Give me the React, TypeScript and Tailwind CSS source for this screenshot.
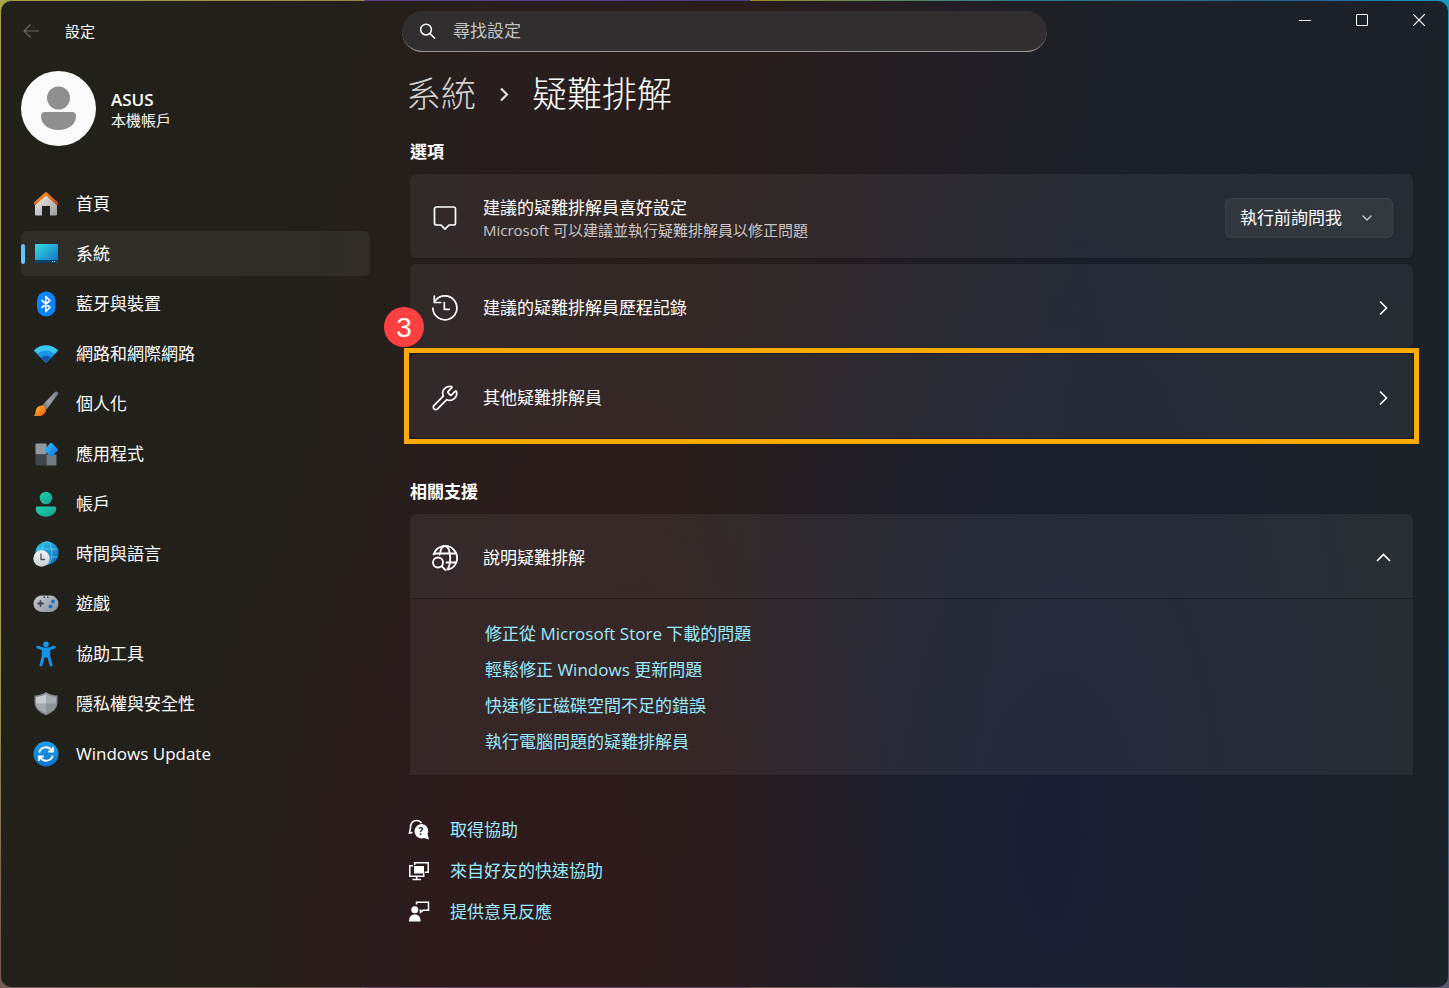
import type { ReactNode } from "react";
import { ChevronDown, Wrench } from "lucide-react";

const HomeIcon = () => (
  <svg width="26" height="26" viewBox="0 0 26 26" aria-hidden="true">
    <defs>
      <linearGradient id="home-wall" x1="0" y1="0" x2="1" y2="1">
        <stop offset="0" stopColor="#f0f0f0" />
        <stop offset="1" stopColor="#9b9b9b" />
      </linearGradient>
      <linearGradient id="home-roof" x1="0" y1="0" x2="1" y2="1">
        <stop offset="0" stopColor="#ff9a1f" />
        <stop offset="1" stopColor="#d14a0c" />
      </linearGradient>
    </defs>
    <path d="M13 4 24 14v9.500a1 1 0 0 1-1 1h-6V15H9v9.500H3a1 1 0 0 1-1-1V14Z" fill="url(#home-wall)" />
    <path d="M2.200 12.300 13 2.500l10.800 9.800" fill="none" stroke="url(#home-roof)" strokeWidth="2.800" strokeLinecap="round" strokeLinejoin="round" />
  </svg>
);

const SystemIcon = () => (
  <svg width="26" height="26" viewBox="0 0 26 26" aria-hidden="true">
    <defs>
      <linearGradient id="sys-screen" x1="0" y1="0" x2="1" y2="1">
        <stop offset="0" stopColor="#38dbe6" />
        <stop offset="1" stopColor="#0f6fc5" />
      </linearGradient>
    </defs>
    <rect x="2" y="3" width="23" height="19" rx="1" fill="url(#sys-screen)" />
    <path d="M2 19h23v2a1 1 0 0 1-1 1H3a1 1 0 0 1-1-1Z" fill="#0c4267" />
    <path d="M19 20h1v1h-1zM21 20h1v1h-1z" fill="#8fd6ee" />
  </svg>
);

const BluetoothIcon = () => (
  <svg width="26" height="26" viewBox="0 0 26 26" aria-hidden="true">
    <rect x="4" y="0.500" width="18.500" height="25" rx="9" fill="#0a84ff" />
    <path d="M8.500 9.200 17 16.500l-4.200 4V5.500l4.200 4-8.500 7.300" fill="none" stroke="#fff" strokeWidth="1.700" strokeLinejoin="round" />
  </svg>
);

const NetworkIcon = () => (
  <svg width="26" height="26" viewBox="0 0 26 26" aria-hidden="true">
    <path d="M.8 9.500C7.500 2.600 18.500 2.600 25.200 9.500L13 21.800Z" fill="#39c8f5" />
    <path d="M4.200 13c5-4.700 12.600-4.700 17.600 0L13 21.800Z" fill="#1f93e4" />
    <path d="M8 16.700c3-2.600 7-2.600 10 0l-5 5.100Z" fill="#0f58a8" />
  </svg>
);

const BrushIcon = () => (
  <svg width="26" height="26" viewBox="0 0 26 26" aria-hidden="true">
    <defs>
      <linearGradient id="brush-handle" x1="1" y1="0" x2="0" y2="1">
        <stop offset="0" stopColor="#747b82" />
        <stop offset="0.600" stopColor="#9ba2a9" />
        <stop offset="1" stopColor="#656c73" />
      </linearGradient>
      <linearGradient id="brush-tip" x1="0" y1="0" x2="1" y2="1">
        <stop offset="0" stopColor="#ffc02e" />
        <stop offset="1" stopColor="#ec5a12" />
      </linearGradient>
    </defs>
    <path d="M24.600 1c.8.700.6 2-.2 3L13.700 18.300l-4.300-4L21.200 1.600C22.300.4 23.700.2 24.600 1Z" fill="url(#brush-handle)" />
    <path d="M7.800 14.700c3.400-.6 6 2.300 4.900 5.700-1.300 4-6.300 5.600-12 4.200 2.200-1.300 1.600-3.300 2.300-5.800.6-2.200 2.400-3.700 4.800-4.100Z" fill="url(#brush-tip)" />
  </svg>
);

const AppsIcon = () => (
  <svg width="26" height="26" viewBox="0 0 26 26" aria-hidden="true">
    <defs>
      <linearGradient id="apps-diamond" x1="0" y1="0" x2="1" y2="1">
        <stop offset="0" stopColor="#3ac4fb" />
        <stop offset="1" stopColor="#0a6fd6" />
      </linearGradient>
    </defs>
    <path d="M3.500 2.500h10v11h-11v-10a1 1 0 0 1 1-1Z" fill="#9299a1" />
    <path d="M2.500 13.500h11v11h-10a1 1 0 0 1-1-1Z" fill="#41464c" />
    <path d="M13.500 13.500h10v10a1 1 0 0 1-1 1h-9Z" fill="#737a82" />
    <path d="M17.300 2.300a1.300 1.300 0 0 1 1.800 0l5.600 5.600a1.300 1.300 0 0 1 0 1.800l-5.600 5.600a1.300 1.300 0 0 1-1.800 0l-5.600-5.600a1.300 1.300 0 0 1 0-1.800Z" fill="url(#apps-diamond)" />
  </svg>
);

const AccountIcon = () => (
  <svg width="26" height="26" viewBox="0 0 26 26" aria-hidden="true">
    <defs>
      <linearGradient id="acct" x1="0" y1="0" x2="1" y2="1">
        <stop offset="0" stopColor="#23d3ae" />
        <stop offset="1" stopColor="#119c8b" />
      </linearGradient>
    </defs>
    <circle cx="13" cy="7" r="6.300" fill="url(#acct)" />
    <path d="M4.500 15.500h17a1.800 1.800 0 0 1 1.800 1.800c0 5-4.300 8.400-10.300 8.400S2.700 22.300 2.700 17.300a1.800 1.800 0 0 1 1.800-1.800Z" fill="url(#acct)" />
  </svg>
);

const TimeIcon = () => (
  <svg width="26" height="26" viewBox="0 0 26 26" aria-hidden="true">
    <defs>
      <linearGradient id="time-globe" x1="0" y1="0" x2="1" y2="1">
        <stop offset="0" stopColor="#35c9ea" />
        <stop offset="1" stopColor="#0c62bd" />
      </linearGradient>
      <linearGradient id="time-clock" x1="0" y1="0" x2="0" y2="1">
        <stop offset="0" stopColor="#f5f5f5" />
        <stop offset="1" stopColor="#c9ced2" />
      </linearGradient>
    </defs>
    <circle cx="14" cy="12" r="11.500" fill="url(#time-globe)" />
    <g fill="none" stroke="#5fe0f4" strokeOpacity="0.700" strokeWidth="1">
      <ellipse cx="14" cy="12" rx="5" ry="11.500" />
      <path d="M3.500 8h21M3.500 16h21" />
    </g>
    <circle cx="8.500" cy="17.500" r="8.200" fill="url(#time-clock)" />
    <path d="M8 12.500v6h4" fill="none" stroke="#50565c" strokeWidth="1.300" />
  </svg>
);

const GamingIcon = () => (
  <svg width="26" height="26" viewBox="0 0 26 26" aria-hidden="true">
    <defs>
      <linearGradient id="pad" x1="0" y1="0" x2="1" y2="1">
        <stop offset="0" stopColor="#c8cdd2" />
        <stop offset="1" stopColor="#8a9199" />
      </linearGradient>
    </defs>
    <rect x="0.500" y="4.500" width="25" height="16.500" rx="8.200" fill="url(#pad)" />
    <path d="M7.500 9.300v6.400M4.300 12.500h6.400" stroke="#41474d" strokeWidth="1.800" />
    <path d="M10.500 5.500h1.500v1.500h-1.500zM14 5.500h1.500v1.500H14z" fill="#41474d" />
    <circle cx="20" cy="10.500" r="2" fill="#0d78d4" />
    <circle cx="17.500" cy="15.500" r="2" fill="#0d78d4" />
  </svg>
);

const AccessibilityIcon = () => (
  <svg width="26" height="26" viewBox="0 0 26 26" aria-hidden="true">
    <circle cx="13" cy="3.200" r="2.800" fill="#1798ec" />
    <path d="M4.800 6.200 10 8h6l5.200-1.800M10.300 8v7L8 24M15.700 8v7L18 24" fill="none" stroke="#1593e8" strokeWidth="3" strokeLinecap="round" strokeLinejoin="round" />
    <path d="M9.500 7h7v9.500h-7z" fill="#1593e8" />
  </svg>
);

const ShieldIcon = () => (
  <svg width="26" height="26" viewBox="0 0 26 26" aria-hidden="true">
    <path d="M13 1c3.500 2.400 7 3.300 11.500 3.500V11c0 6-4 10.200-11.500 13.300C5.500 21.200 1.500 17 1.500 11V4.500C6 4.300 9.500 3.400 13 1Z" fill="#85898d" />
    <path d="M13 3v9.800H3V5.900c4-.3 7-1.100 10-2.900Z" fill="#c6cacd" />
    <path d="M13 3c3 1.800 6 2.600 10 2.900v6.900H13Z" fill="#a6abb0" />
    <path d="M3 12.800h10v9.700c-6.500-2.900-9.800-5.500-10-9.700Z" fill="#a3a8ad" />
    <path d="M13 12.800h10c-.2 4.200-3.500 6.800-10 9.700Z" fill="#8c9298" />
  </svg>
);

const UpdateIcon = () => (
  <svg width="26" height="26" viewBox="0 0 26 26" aria-hidden="true">
    <defs>
      <linearGradient id="upd" x1="0" y1="0" x2="0" y2="1">
        <stop offset="0" stopColor="#1ea0ee" />
        <stop offset="1" stopColor="#0c72cf" />
      </linearGradient>
    </defs>
    <circle cx="13" cy="13" r="12.500" fill="url(#upd)" />
    <path d="M6.200 11.500a7 7 0 0 1 12.600-2M20 6v4.500h-4.800M19.800 14.500a7 7 0 0 1-12.600 2M6 20v-4.500h4.800" fill="none" stroke="#fff" strokeWidth="1.900" />
  </svg>
);

const PromptIcon = () => (
  <svg width="28" height="28" viewBox="0 0 28 28" fill="none" stroke="#fff" strokeWidth="1.700" strokeLinejoin="round" aria-hidden="true">
    <path d="M5.500 3h17a2 2 0 0 1 2 2v14a2 2 0 0 1-2 2H18l-4 4.200L10 21H5.500a2 2 0 0 1-2-2V5a2 2 0 0 1 2-2Z" />
  </svg>
);

const HistoryIcon = () => (
  <svg width="28" height="28" viewBox="0 0 28 28" fill="none" stroke="#fff" strokeWidth="1.700" strokeLinecap="round" strokeLinejoin="round" aria-hidden="true">
    <path d="M1.900 14a12 12 0 1 0 2.300-7.200" />
    <path d="M3.300 2.200v6.300h6.400M13.300 8.500v6.800h4.900" />
  </svg>
);

const GlobeSearchIcon = () => (
  <svg width="28" height="28" viewBox="0 0 28 28" fill="none" stroke="#fff" strokeWidth="1.800" strokeLinecap="round" aria-hidden="true">
    <path d="M2.600 10.500a12 12 0 1 1 14.900 15" />
    <path d="M3.500 9.500h21M15.500 18.500h9.500M8.800 10.500C9.500 5.200 11.500 2 14 2c3 0 5.200 5.200 5.200 12 0 5-.8 9-2.800 11.300" />
    <circle cx="7" cy="18.500" r="5" />
    <path d="m10.800 22.300 3.700 3.700" />
  </svg>
);

const GetHelpIcon = () => (
  <svg width="22" height="22" viewBox="0 0 22 22" aria-hidden="true">
    <path d="M4.500 13.500 1.500 14l1-5C2.200 4.500 4.800 1.500 8.500 1.500c2.300 0 4 1 5 2.700" fill="none" stroke="#fff" strokeWidth="1.600" />
    <path d="M13 5a7 7 0 0 1 6.500 10L21 20.500 16 19A7.200 7.200 0 1 1 13 5Z" fill="#fff" />
    <text x="13" y="15.500" textAnchor="middle" fill="#2b1c1b" fontSize="10" fontWeight="bold">?</text>
  </svg>
);

const QuickAssistIcon = () => (
  <svg width="22" height="22" viewBox="0 0 22 22" fill="none" stroke="#fff" strokeWidth="1.500" aria-hidden="true">
    <path d="M6.700 5V2.800h13.500v9.500h-3.500M5 5.800H1.800v10.500h13.900v-3M8.700 16.500v3M4.500 19.500h8.500" />
    <path d="M6 6h10v7.500H6z" fill="#fff" stroke="none" />
  </svg>
);

const FeedbackIcon = () => (
  <svg width="22" height="22" viewBox="0 0 22 22" aria-hidden="true">
    <circle cx="6.800" cy="8.800" r="3.500" fill="#fff" />
    <path d="M1 20.500c0-4.500 2-7 5.800-7s5.800 2.500 5.800 7Z" fill="#fff" />
    <path d="M8.500 3.500V1.300h12v8H15l-2.500 2V9.300h-1" fill="none" stroke="#fff" strokeWidth="1.500" />
  </svg>
);

const ChevronIcon = ({ d }: { d: string }) => (
  <svg width="20" height="20" viewBox="0 0 20 20" fill="none" stroke="#fff" strokeWidth="1.600" aria-hidden="true">
    <path d={d} />
  </svg>
);

const chevronRight = "m7 3.500 6.500 6.500L7 16.500";
const chevronUp = "m4 13 6.500-6.500L17 13";

const navItems = [
  { label: "首頁", icon: HomeIcon },
  { label: "系統", icon: SystemIcon, active: true },
  { label: "藍牙與裝置", icon: BluetoothIcon },
  { label: "網路和網際網路", icon: NetworkIcon },
  { label: "個人化", icon: BrushIcon },
  { label: "應用程式", icon: AppsIcon },
  { label: "帳戶", icon: AccountIcon },
  { label: "時間與語言", icon: TimeIcon },
  { label: "遊戲", icon: GamingIcon },
  { label: "協助工具", icon: AccessibilityIcon },
  { label: "隱私權與安全性", icon: ShieldIcon },
  { label: "Windows Update", icon: UpdateIcon },
];

const supportLinks = [
  "修正從 Microsoft Store 下載的問題",
  "輕鬆修正 Windows 更新問題",
  "快速修正磁碟空間不足的錯誤",
  "執行電腦問題的疑難排解員",
];

const footerLinks = [
  { label: "取得協助", icon: GetHelpIcon },
  { label: "來自好友的快速協助", icon: QuickAssistIcon },
  { label: "提供意見反應", icon: FeedbackIcon },
];

const TitleBar = () => (
  <header className="grid grid-cols-[1fr_minmax(0,645px)_1fr]">
    <div className="flex items-center gap-6 pt-2 pl-5">
      <button aria-label="返回" className="text-[#6a6964]">
        <svg width="20" height="20" viewBox="0 0 20 20" fill="none" stroke="currentColor" strokeWidth="1.200" aria-hidden="true">
          <path d="M18 10H3M9.500 3.500 3 10l6.500 6.500" />
        </svg>
      </button>
      <span className="text-[15px] leading-5">設定</span>
    </div>
    <label className="mt-2.5 flex h-[41px] items-center gap-4 overflow-hidden rounded-full border-b border-[#9a9998] bg-[#302e2e] pl-4">
      <svg width="20" height="20" viewBox="0 0 20 20" fill="none" stroke="#fff" strokeWidth="1.600" aria-hidden="true">
        <circle cx="8.500" cy="8.500" r="5.700" />
        <path d="m12.600 12.600 5.400 5.400" />
      </svg>
      <input
        type="search"
        aria-label="尋找設定"
        placeholder="尋找設定"
        className="w-full bg-transparent text-[17px] leading-6 outline-none placeholder:text-[#c6c4c3]"
      />
    </label>
    <div className="flex h-[38px] justify-end pr-px">
      <button aria-label="最小化" className="flex w-[57px] items-center justify-center">
        <svg width="12" height="12" viewBox="0 0 12 12" stroke="#fff" aria-hidden="true">
          <path d="M0 6.500h12" />
        </svg>
      </button>
      <button aria-label="最大化" className="flex w-[57px] items-center justify-center">
        <svg width="12" height="12" viewBox="0 0 12 12" fill="none" stroke="#fff" aria-hidden="true">
          <rect x="0.500" y="0.500" width="11" height="11" rx="0.500" />
        </svg>
      </button>
      <button aria-label="關閉" className="flex w-[57px] items-center justify-center">
        <svg width="12" height="12" viewBox="0 0 12 12" stroke="#fff" strokeWidth="1.200" aria-hidden="true">
          <path d="m0 0 12 12M12 0 0 12" />
        </svg>
      </button>
    </div>
  </header>
);

const Sidebar = () => (
  <aside className="w-[369px] shrink-0 pt-[19px] pl-5">
    <div className="flex items-center gap-[15px]">
      <svg width="75" height="75" viewBox="0 0 75 75" aria-hidden="true">
        <circle cx="37.500" cy="37.500" r="37.500" fill="#fafafa" />
        <circle cx="37.500" cy="27" r="11.500" fill="#8f8f8f" />
        <path d="M24 41h27a4 4 0 0 1 4 4c0 8.500-7.500 14-17.500 14S20 53.500 20 45a4 4 0 0 1 4-4Z" fill="#8f8f8f" />
      </svg>
      <div className="pt-0.5">
        <p className="text-[17px] leading-5 font-semibold">ASUS</p>
        <p className="text-[15px] leading-5">本機帳戶</p>
      </div>
    </div>
    <nav className="mt-[35px] flex flex-col gap-[5px] text-[17px] leading-6">
      {navItems.map((item) => (
        <a
          key={item.label}
          href="#"
          aria-current={item.active ? "page" : undefined}
          className={`relative flex h-[45px] items-center gap-[17px] rounded-md pl-3 ${
            item.active ? "bg-white/6" : ""
          }`}
        >
          {item.active && (
            <span className="absolute top-[13px] left-0 h-5 w-1 rounded-full bg-[#5fc7ff]" />
          )}
          <item.icon />
          {item.label}
        </a>
      ))}
    </nav>
  </aside>
);

interface RowTextProps {
  icon: ReactNode;
  title: string;
  desc?: string;
}

const RowText = ({ icon, title, desc }: RowTextProps) => (
  <span className="flex flex-1 items-center gap-6 text-left">
    {icon}
    <span className="flex flex-col">
      <span className="text-[17px] leading-6">{title}</span>
      {desc && <span className="text-[15px] leading-5 text-[#cbc6c5]">{desc}</span>}
    </span>
  </span>
);

const rowClass =
  "flex h-[84px] w-full items-center rounded-md bg-white/5 pt-[3px] pr-5 pl-[21px] ring-1 ring-black/10";

const App = () => {
  return (
    <div className="flex min-h-screen bg-[linear-gradient(180deg,transparent_60%,#6b4a58cc_95%),linear-gradient(90deg,#a8a348_0px,#918c48_364px,#5b3f8a_365px,#4b3c86_750px,#9a8f2c_751px,#2f7f86_1000px,#2a5f92_1300px,#1598c4_100%)] p-px font-['Open_Sans','Noto_Sans_CJK_TC',sans-serif] text-white">
      <div className="flex flex-1 flex-col rounded-[10px] bg-[#1c2128] bg-[radial-gradient(ellipse_26%_60%_at_37%_95%,#31191bcc,transparent),radial-gradient(ellipse_24%_75%_at_73%_85%,#1a1e33,transparent),linear-gradient(97deg,#22211b_0%,#23201b_22%,#281e1e_32%,#291d1b_46%,#231e22_58%,#1c2029_72%,#1b2228_100%)]">
        <TitleBar />
        <div className="flex flex-1">
          <Sidebar />
          <main className="min-w-0 flex-1 pt-5 pr-[35px] pl-10">
            <h1 className="-ml-1 flex items-center gap-[22px] text-[35px] leading-[44px]">
              <a href="#" className="font-light text-[#d4d2d1]">系統</a>
              <svg width="12" height="16" viewBox="0 0 12 16" fill="none" stroke="#dedcdc" strokeWidth="2.200" aria-hidden="true">
                <path d="m3 2.500 6 6-6 6" />
              </svg>
              <span className="font-light">疑難排解</span>
            </h1>

            <section>
              <h2 className="mt-6 text-[17px] leading-6 font-semibold">選項</h2>
              <div className="mt-2.5 flex flex-col gap-1.5">
                <div className={rowClass}>
                  <RowText
                    icon={<PromptIcon />}
                    title="建議的疑難排解員喜好設定"
                    desc="Microsoft 可以建議並執行疑難排解員以修正問題"
                  />
                  <div className="relative">
                    <select
                      aria-label="建議的疑難排解員喜好設定"
                      className="h-10 w-[168px] appearance-none rounded-md border border-white/5 bg-white/6 pl-3.5 text-[17px] leading-6"
                    >
                      <option>執行前詢問我</option>
                    </select>
                    <ChevronDown size={16} strokeWidth={2} className="pointer-events-none absolute top-3 right-[18px] text-[#c9cbce]" />
                  </div>
                </div>

                <button className={rowClass}>
                  <RowText icon={<HistoryIcon />} title="建議的疑難排解員歷程記錄" />
                  <ChevronIcon d={chevronRight} />
                </button>

                <div className="relative">
                  <button className={rowClass}>
                    <RowText icon={<Wrench size={28} strokeWidth={1.5} />} title="其他疑難排解員" />
                    <ChevronIcon d={chevronRight} />
                  </button>
                  <div className="pointer-events-none absolute -inset-1.5 border-[5px] border-[#fbab05]" />
                  <span className="absolute -top-[47px] -left-[26px] flex size-10 items-center justify-center rounded-full bg-[#ff4040] pt-0.5 font-['Liberation_Sans',sans-serif] text-[28px] leading-8">
                    3
                  </span>
                </div>
              </div>
            </section>

            <section>
              <h2 className="mt-[42px] text-[17px] leading-6 font-semibold">相關支援</h2>
              <div className="mt-2.5 overflow-hidden rounded-t-md ring-1 ring-black/10">
                <button aria-expanded="true" className="flex h-[85px] w-full items-center border-b border-black/30 bg-white/6 pt-[3px] pr-5 pl-[21px]">
                  <RowText icon={<GlobeSearchIcon />} title="說明疑難排解" />
                  <ChevronIcon d={chevronUp} />
                </button>
                <ul className="bg-white/5 pt-[17px] pb-[15px] pl-[75px] text-[17px] text-[#99ebff]">
                  {supportLinks.map((link) => (
                    <li key={link} className="leading-9">
                      <a href="#">{link}</a>
                    </li>
                  ))}
                </ul>
              </div>
            </section>

            <ul className="mt-[34px] text-[17px] text-[#99ebff]">
              {footerLinks.map((link) => (
                <li key={link.label}>
                  <a href="#" className="-ml-0.5 flex h-[41px] items-center gap-5">
                    <link.icon />
                    {link.label}
                  </a>
                </li>
              ))}
            </ul>
          </main>
        </div>
      </div>
    </div>
  );
};

export default App;
